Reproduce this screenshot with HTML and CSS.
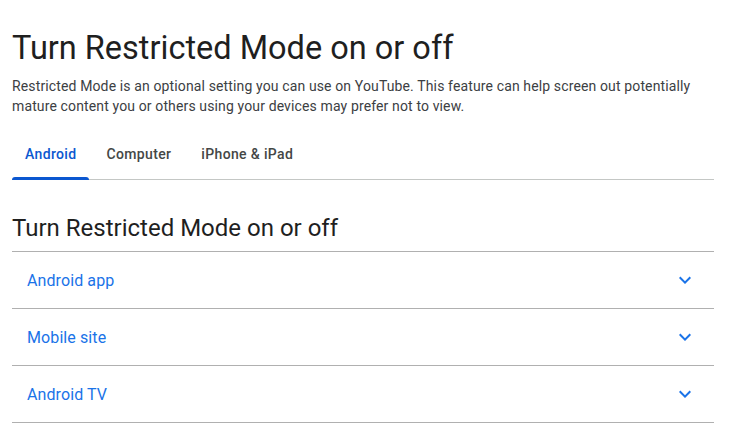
FILE: index.html
```html
<!DOCTYPE html>
<html>
<head>
<meta charset="utf-8">
<link rel="stylesheet" href="styles.css">
</head>
<body>
<main class="page">
  <h1 class="title">Turn Restricted Mode on or off</h1>
  <p class="intro">Restricted Mode is an optional setting you can use on YouTube. This feature can help screen out potentially mature content you or others using your devices may prefer not to view.</p>
  <nav class="tabs">
    <div class="tab active">Android</div>
    <div class="tab">Computer</div>
    <div class="tab">iPhone &amp; iPad</div>
  </nav>
  <h2 class="section">Turn Restricted Mode on or off</h2>
  <div class="acc">
    <div class="row"><span>Android app</span><svg class="chev" viewBox="0 0 24 24" width="24" height="24"><path d="M7.41 8.59 12 13.17l4.59-4.58L18 10l-6 6-6-6z" fill="#1a73e8"/></svg></div>
    <div class="row"><span>Mobile site</span><svg class="chev" viewBox="0 0 24 24" width="24" height="24"><path d="M7.41 8.59 12 13.17l4.59-4.58L18 10l-6 6-6-6z" fill="#1a73e8"/></svg></div>
    <div class="row"><span>Android TV</span><svg class="chev" viewBox="0 0 24 24" width="24" height="24"><path d="M7.41 8.59 12 13.17l4.59-4.58L18 10l-6 6-6-6z" fill="#1a73e8"/></svg></div>
  </div>
</main>
</body>
</html>
```
FILE: styles.css
```css
* { box-sizing: border-box; }
body { margin: 0; background: #fff; font-family: Roboto, "Liberation Sans", sans-serif; color: #202124; }
.page { width: 702px; margin-left: 12px; padding-top: 28px; }
.title { margin: 0; font-size: 32.5px; font-weight: 400; line-height: 40px; color: #1f1f1f; }
.intro { margin: 8px 0 0; font-size: 14px; line-height: 20px; color: #3c4043; letter-spacing: 0.13px; }
.tabs { display: flex; gap: 4px; margin-top: 14px; border-bottom: 1px solid #c4c7c5; }
.tab { padding: 0 13px; height: 49px; line-height: 48px; font-size: 14px; font-weight: 500; color: #444746; letter-spacing: 0.35px; }
.tab.active { color: #0b57d0; position: relative; }
.tab.active::after { content: ""; position: absolute; left: 0; right: 0; bottom: -1px; height: 3px; background: #0b57d0; border-radius: 3px 3px 0 0; }
.section { margin: 34px 0 0; font-size: 24px; font-weight: 400; line-height: 28px; color: #1f1f1f; padding-bottom: 9px; border-bottom: 1px solid #b0b0b0; }
.row { display: flex; align-items: center; justify-content: space-between; height: 57px; padding: 0 17px 0 15px; border-bottom: 1px solid #b0b0b0; font-size: 16px; color: #1a73e8; letter-spacing: 0.1px; }
.chev { width: 24px; height: 24px; }
```
